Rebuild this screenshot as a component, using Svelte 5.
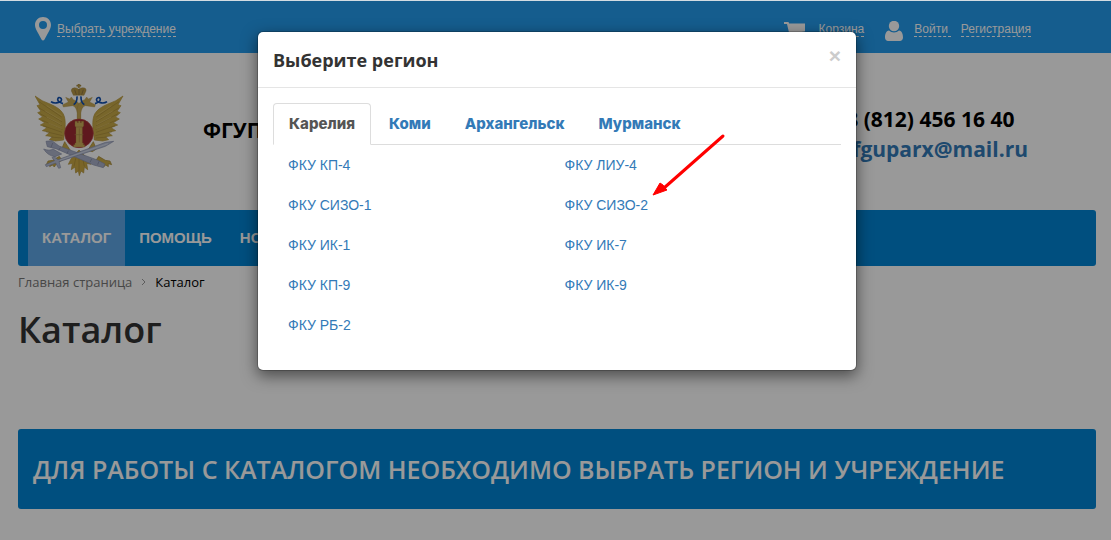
<script>
	const regions = [
		{ name: "Карелия", items: ["ФКУ КП-4", "ФКУ ЛИУ-4", "ФКУ СИЗО-1", "ФКУ СИЗО-2", "ФКУ ИК-1", "ФКУ ИК-7", "ФКУ КП-9", "ФКУ ИК-9", "ФКУ РБ-2"] },
		{ name: "Коми", items: [] },
		{ name: "Архангельск", items: [] },
		{ name: "Мурманск", items: [] },
	];
	const menu = ["Каталог", "Помощь", "Новости"];

	let active = $state(0);
	let open = $state(true);
</script>

<div class="page">
	<div class="topbar">
		<div class="group">
			<svg class="pin" width="16" height="24" viewBox="0 0 16 24">
				<path fill-rule="evenodd" d="M8 0C3.500 0 0 3.500 0 8c0 3 1.500 5 3 8l3.500 6.500q1.500 2 3 0L13 16c1.500-3 3-5 3-8 0-4.500-3.500-8-8-8zm0 4a4 4 0 1 1 0 8 4 4 0 0 1 0-8z" />
			</svg>
			<button class="dashed" onclick={() => (open = true)}>Выбрать учреждение</button>
		</div>
		<div class="group">
			<svg class="cart" width="22" height="20" viewBox="0 0 22 20">
				<path d="M0 0h4.500l.6 1.500H21v8L7 11.500l.5 1.500H19v2H6L3 2H0z" />
				<circle cx="8" cy="18" r="2" />
				<circle cx="17" cy="18" r="2" />
			</svg>
			<a class="dashed" href="#cart">Корзина</a>
			<svg class="user" width="18" height="20" viewBox="0 0 18 20">
				<path d="M4 9.500Q6 11.500 9 11.500t5-2c3 .5 4 3.500 4 7 0 2-1.500 3.500-3 3.500H3c-1.500 0-3-1.500-3-3.500 0-3.500 1-6.500 4-7z" />
				<circle cx="9" cy="5" r="5.200" />
			</svg>
			<a class="dashed login" href="#login">Войти</a>
			<a class="dashed" href="#register">Регистрация</a>
		</div>
	</div>

	<div class="container">
		<header>
			<svg class="emblem" width="92" height="92" viewBox="45 27 276 276">
				<defs>
					<g id="half">
						<path d="M45 63q20 16 45 24 30 12 40 30 8 16 5 45l-4 33-25 3-18-4 10-9-21-3 13-10-23-5 14-9-20-8 13-7-18-11 12-6-15-13 10-4-12-17 9-3z" fill="#c9ab48" stroke="#b6973c" stroke-width="2" />
						<path d="M57 80l68 46M56 98l70 42M60 116l66 36M65 135l62 28M69 152l57 20M78 170l50 12M92 186l34 3" fill="none" stroke="#a98b38" stroke-width="2" />
						<path d="M80 92l46 30M76 108l48 28M80 126l44 23M85 144l40 17" fill="none" stroke="#dcc06a" stroke-width="2" />
						<path d="M172 145v-30q-3-20-14-23l-28 4-2-7 17-8-8-14 12 5 5-6 6 8q20 6 22 26v45z" fill="#c7a955" stroke="#a68840" stroke-width="1" />
						<path d="M134 200l-9 22 12 8 14-4zM118 244l-20 12-14 2-5 11 10-3 0 9 8-5 6 6 6-10 17-10z" fill="#c9ab48" stroke="#a58738" stroke-width="2" />
						<path d="M93 80q8 6 20 3 16-4 10-13-8-6-10 3 0 8 16 13M171 64q1 18-10 25" fill="none" stroke="#1150b0" stroke-width="5" />
					</g>
				</defs>
				<use href="#half" />
				<use href="#half" transform="matrix(-1 0 0 1 354 0)" />
				<path d="M177 225l-24 27-8 16 12-3-3 19 11-8 2 18 8-6 3 14 5-14 8 6 2-18 10 8-3-19 13 3-9-16z" fill="#cba944" stroke="#b0913a" stroke-width="2" />
				<path d="M177 245v44M167 250l-5 24M188 250l5 24" stroke="#a98a35" stroke-width="2" />
				<path d="M160 61l-6-13q-1-10 10-10 8 0 12 5 4-5 12-5 12 0 10 10l-6 13zM174 38v-4h-4v-4h4v-4h5v4h4v4h-4v4z" fill="#b89845" stroke="#8f763b" stroke-width="1" />
				<path d="M177 42v18M164 44l5 15M190 44l-5 15" stroke="#7c6740" stroke-width="2" />
				<circle cx="177" cy="175" r="43" fill="#9f2b32" stroke="#b6453c" stroke-width="2" />
				<path d="M165 139h7v4h3v-5h6v5h3v-4h7v14l-4 4v47h3v5h4v7h-33v-7h4v-5h3v-47l-3-4z" fill="#ceae5a" stroke="#a58540" stroke-width="1" />
				<path d="M178 160v42M168 156h18M164 179h26" stroke="#a98a45" stroke-width="2" />
				<path d="M78 199l18-2 21 16 115 42 23 12-5 11-29-8-113-49-26-6z" fill="#a9b0c8" stroke="#8a91ad" stroke-width="2" />
				<path d="M281 199l-24 3-143 52-12-9-6 3 8 9-28 12 3 6 28-11 9 16 6-2-5-18 139-46z" fill="#b7bfd5" stroke="#8a91ad" stroke-width="2" />
				<path d="M120 255l144-49" stroke="#dfe4ef" stroke-width="2" />
				<path d="M71 222q18 7 28 0l26 15-20 8q-22-3-34-23z" fill="#adb4ca" stroke="#8a91ad" stroke-width="2" />
				<path d="M98 204l-5 13M121 218l-5 8M145 227l-4 9M215 252l-5 10M237 259l-4 10" stroke="#7c829d" stroke-width="2" />
			</svg>
			<strong class="company">ФГУП</strong>
			<div class="contacts">
				<span>8 (812) 456 16 40</span>
				<a href="mailto:fguparx@mail.ru">fguparx@mail.ru</a>
			</div>
		</header>

		<nav class="menu">
			{#each menu as item, i}
				<a href="#{i}" class:current={i === 0}>{item}</a>
			{/each}
		</nav>

		<div class="crumbs">
			<a href="#home">Главная страница</a>
			<svg width="5" height="8" viewBox="0 0 5 8"><path d="M1 1l3 3-3 3" fill="none" stroke="#999" /></svg>
			<span>Каталог</span>
		</div>
		<h1>Каталог</h1>
		<div class="notice">Для работы с каталогом необходимо выбрать регион и учреждение</div>
	</div>

	{#if open}
		<div class="backdrop">
			<div class="modal" role="dialog" aria-labelledby="modal-title">
				<div class="modal-header">
					<h4 id="modal-title">Выберите регион</h4>
					<button class="close" aria-label="Закрыть" onclick={() => (open = false)}>×</button>
				</div>
				<div class="modal-body">
					<div class="tabs" role="tablist">
						{#each regions as region, i}
							<button role="tab" aria-selected={active === i} class:active={active === i} onclick={() => (active = i)}>{region.name}</button>
						{/each}
					</div>
					<div class="places">
						{#each regions[active].items as item}
							<a href="#place">{item}</a>
						{/each}
					</div>
				</div>
				<svg class="arrow" width="76" height="66" viewBox="0 0 76 66">
					<path d="M71 4L12 56" stroke="#f00" stroke-width="3" stroke-linecap="round" />
					<path d="M1 63L8 51l3 2 3 4 1 1z" fill="#f00" stroke="#f00" />
				</svg>
			</div>
		</div>
	{/if}
</div>

<style>
	:global(body) {
		margin: 0;
	}
	.page {
		position: relative;
		box-sizing: border-box;
		min-height: 100vh;
		border-top: 1px solid #d3dce2;
		background: #fff;
		font-family: "Open Sans", sans-serif;
	}
	a {
		color: inherit;
		text-decoration: none;
	}
	button {
		padding: 0;
		border: 0;
		background: none;
		color: inherit;
		font: inherit;
		cursor: pointer;
	}
	.topbar {
		display: flex;
		justify-content: space-between;
		align-items: center;
		height: 52px;
		padding: 0 80px 0 35px;
		background: #239bed;
		color: #fff;
		font: 12px/14px "Liberation Sans", Arial, sans-serif;
	}
	.topbar svg {
		fill: #fff;
	}
	.group {
		display: flex;
		align-items: center;
		padding-top: 4px;
	}
	.dashed {
		border-bottom: 1px dashed #fff;
	}
	.pin {
		margin-right: 6px;
	}
	.cart {
		margin: 6px 13px 0 0;
	}
	.user {
		margin: 4px 11px 0 21px;
	}
	.login {
		padding-right: 3px;
		margin-right: 10px;
	}
	.container {
		padding: 0 15px 0 18px;
	}
	header {
		display: flex;
		align-items: center;
		height: 157px;
		font-size: 21px;
		line-height: 30px;
	}
	.emblem {
		margin: 0 76px 4px 17px;
	}
	.company,
	.contacts {
		color: #000;
		font-weight: 700;
	}
	.company {
		margin-bottom: 4px;
	}
	.contacts {
		display: flex;
		flex-direction: column;
		margin: 4px 68px 0 auto;
	}
	.contacts span {
		margin-left: -6px;
	}
	.contacts a {
		color: #337ab7;
	}
	.menu {
		display: flex;
		height: 56px;
		padding-left: 10px;
		border-radius: 3px;
		background: #0084d4;
		color: #fff;
		font: bold 15px/56px "Liberation Sans", Arial, sans-serif;
		text-transform: uppercase;
	}
	.menu a {
		padding: 0 14px;
	}
	.menu .current {
		background: #5fa7e6;
	}
	.crumbs {
		display: flex;
		align-items: center;
		gap: 9px;
		padding-top: 7px;
		color: #000;
		font-size: 13px;
		line-height: 18px;
	}
	.crumbs a {
		color: #777;
	}
	h1 {
		margin: 15px 0 75px;
		color: #333;
		font-size: 36px;
		font-weight: 600;
		line-height: 48px;
	}
	.notice {
		padding: 0 15px;
		border-radius: 3px;
		background: #0084d4;
		color: #fff;
		font-size: 25px;
		font-weight: 600;
		line-height: 80px;
		text-transform: uppercase;
	}
	.backdrop {
		position: absolute;
		inset: 0;
		padding: 30px 0 0 3px;
		background: rgba(0, 0, 0, 0.4);
	}
	.modal {
		position: relative;
		box-sizing: border-box;
		max-width: 600px;
		margin: 0 auto;
		border: 1px solid rgba(0, 0, 0, 0.2);
		border-radius: 6px;
		background: #fff;
		background-clip: padding-box;
		box-shadow: 0 5px 15px rgba(0, 0, 0, 0.5);
	}
	.modal-header {
		display: flex;
		align-items: center;
		justify-content: space-between;
		height: 55px;
		padding: 0 15px;
		border-bottom: 1px solid #e5e5e5;
	}
	h4 {
		margin: 0;
		color: #333;
		font-size: 18px;
		font-weight: 700;
	}
	.close {
		padding-bottom: 8px;
		color: #ccc;
		font: bold 21px/21px "Liberation Sans", Arial, sans-serif;
	}
	.modal-body {
		padding: 15px 15px 25px;
	}
	.tabs {
		display: flex;
		gap: 2px;
		border-bottom: 1px solid #ddd;
	}
	.tabs button {
		margin-bottom: -1px;
		padding: 10px 15px;
		border: 1px solid transparent;
		border-radius: 4px 4px 0 0;
		color: #337ab7;
		font: 800 15px/20px Inter, sans-serif;
	}
	.tabs .active {
		border-color: #ddd #ddd #fff;
		background: #fff;
		color: #555;
	}
	.places {
		display: grid;
		grid-template-columns: 1fr 1fr;
		padding-left: 15px;
		color: #337ab7;
		font: 14px/40px "Liberation Sans", Arial, sans-serif;
	}
	.arrow {
		position: absolute;
		top: 100px;
		left: 394px;
	}
</style>
